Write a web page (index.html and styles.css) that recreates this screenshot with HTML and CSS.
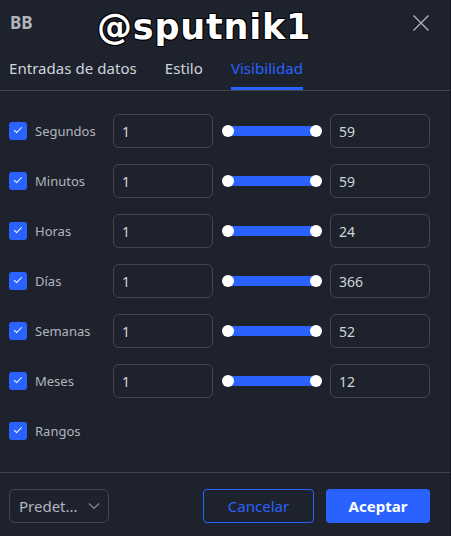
FILE: index.html
```html
<!DOCTYPE html>
<html lang="es">
<head>
  <meta charset="UTF-8">
  <title>BB - Visibilidad</title>
  <link rel="stylesheet" href="styles.css">
</head>
<body>
  <section class="dialog">
    <div class="head">
      <span class="title">BB</span>
      <button class="close" type="button" aria-label="Cerrar">
        <svg width="18" height="18" viewBox="0 0 18 18"><path d="M1.5 1.5l15 15M16.5 1.5l-15 15" stroke="#b2b5be" stroke-width="1.3" fill="none"/></svg>
      </button>
    </div>
    <div class="watermark">@sputnik1</div>

    <nav class="tabs">
      <span class="tab">Entradas de datos</span>
      <span class="tab">Estilo</span>
      <span class="tab active">Visibilidad</span>
    </nav>

    <div class="rows">
      <div class="row">
        <label class="check"><span class="box"></span>Segundos</label>
        <input class="num" type="text" value="1">
        <div class="range"><span class="thumb"></span><span class="thumb"></span></div>
        <input class="num" type="text" value="59">
      </div>
      <div class="row">
        <label class="check"><span class="box"></span>Minutos</label>
        <input class="num" type="text" value="1">
        <div class="range"><span class="thumb"></span><span class="thumb"></span></div>
        <input class="num" type="text" value="59">
      </div>
      <div class="row">
        <label class="check"><span class="box"></span>Horas</label>
        <input class="num" type="text" value="1">
        <div class="range"><span class="thumb"></span><span class="thumb"></span></div>
        <input class="num" type="text" value="24">
      </div>
      <div class="row">
        <label class="check"><span class="box"></span>Días</label>
        <input class="num" type="text" value="1">
        <div class="range"><span class="thumb"></span><span class="thumb"></span></div>
        <input class="num" type="text" value="366">
      </div>
      <div class="row">
        <label class="check"><span class="box"></span>Semanas</label>
        <input class="num" type="text" value="1">
        <div class="range"><span class="thumb"></span><span class="thumb"></span></div>
        <input class="num" type="text" value="52">
      </div>
      <div class="row">
        <label class="check"><span class="box"></span>Meses</label>
        <input class="num" type="text" value="1">
        <div class="range"><span class="thumb"></span><span class="thumb"></span></div>
        <input class="num" type="text" value="12">
      </div>
      <div class="row">
        <label class="check"><span class="box"></span>Rangos</label>
      </div>
    </div>

    <div class="footer">
      <button class="select" type="button">Predet...
        <svg width="12" height="8" viewBox="0 0 12 8"><path d="M1 1.5l5 5 5-5" stroke="#868993" stroke-width="1.2" fill="none"/></svg>
      </button>
      <span class="spacer"></span>
      <button class="btn ghost" type="button">Cancelar</button>
      <button class="btn primary" type="button">Aceptar</button>
    </div>
  </section>
</body>
</html>
```

FILE: styles.css
```css
*,
*::before,
*::after{
  box-sizing: border-box;
}
body{
  margin: 0;
  background-color: #131722;
  font-family: "Noto Sans", "Open Sans", sans-serif;
  color: #d1d4dc;
}
.dialog{
  position: relative;
  width: 450px;
  height: 536px;
  background-color: #1e222d;
}
.head{
  display: flex;
  align-items: center;
  justify-content: space-between;
  height: 48px;
  padding: 0 20px 0 10px;
}
.title{
  font-size: 17px;
  font-weight: bold;
  color: #b2b5be;
  margin-top: -3px;
}
.close{
  background: none;
  border: 0;
  padding: 0;
  margin-top: -2px;
  display: flex;
}
.watermark{
  position: absolute;
  left: 97px;
  top: 7px;
  font-family: "DejaVu Sans", sans-serif;
  font-weight: bold;
  font-size: 35px;
  letter-spacing: 0.8px;
  color: #fff;
  text-shadow: -1px -1px 0 #000, 1px -1px 0 #000, -1px 1px 0 #000, 1px 1px 0 #000;
}
.tabs{
  display: flex;
  height: 43px;
  padding-left: 9px;
  border-bottom: 1px solid #434651;
}
.tab{
  font-size: 15px;
  line-height: 20px;
  letter-spacing: 0.05px;
  padding-top: 10px;
  margin-right: 28px;
  border-bottom: 3px solid transparent;
  color: #d1d4dc;
}
.tab.active{
  color: #2962ff;
  border-bottom-color: #2962ff;
}
.rows{
  display: flex;
  flex-direction: column;
  gap: 16px;
  padding: 23px 0 0 9px;
  height: 382px;
  border-bottom: 1px solid #434651;
}
.row{
  display: flex;
  align-items: center;
  height: 34px;
}
.check{
  display: flex;
  align-items: center;
  gap: 8px;
  width: 104px;
  font-size: 13px;
  color: #b2b5be;
}
.box{
  width: 18px;
  height: 18px;
  border-radius: 3px;
  background-color: #2962ff;
  position: relative;
}
.box::after{
  content: "";
  position: absolute;
  left: 5px;
  top: 5px;
  width: 8px;
  height: 4px;
  border-left: 1.6px solid #fff;
  border-bottom: 1.6px solid #fff;
  transform: rotate(-45deg);
}
.num{
  width: 100px;
  height: 34px;
  border: 1px solid #434651;
  border-radius: 6px;
  background: transparent;
  color: #d1d4dc;
  font-family: inherit;
  font-size: 14px;
  padding: 0 8px;
  outline: 0;
}
.range{
  position: relative;
  display: flex;
  justify-content: space-between;
  align-items: center;
  width: 100px;
  height: 12px;
  margin: 0 8px 0 9px;
}
.range::before{
  content: "";
  position: absolute;
  left: 6px;
  right: 6px;
  top: 1px;
  height: 10px;
  background-color: #2962ff;
}
.thumb{
  position: relative;
  width: 12px;
  height: 12px;
  border-radius: 50%;
  background-color: #fff;
}
.footer{
  display: flex;
  align-items: center;
  gap: 12px;
  padding: 16px 20px 0 9px;
}
.select{
  display: flex;
  align-items: center;
  justify-content: space-between;
  width: 100px;
  height: 34px;
  padding: 0 8px 0 9px;
  background: transparent;
  border: 1px solid #434651;
  border-radius: 6px;
  color: #b2b5be;
  font-family: inherit;
  font-size: 15px;
}
.spacer{
  flex: 1;
}
.btn{
  height: 34px;
  border-radius: 4px;
  font-family: inherit;
  font-size: 15px;
}
.btn.ghost{
  width: 111px;
  background: transparent;
  border: 1px solid #2962ff;
  color: #2962ff;
}
.btn.primary{
  width: 104px;
  background-color: #2962ff;
  border: 0;
  color: #fff;
  font-weight: bold;
}
```
